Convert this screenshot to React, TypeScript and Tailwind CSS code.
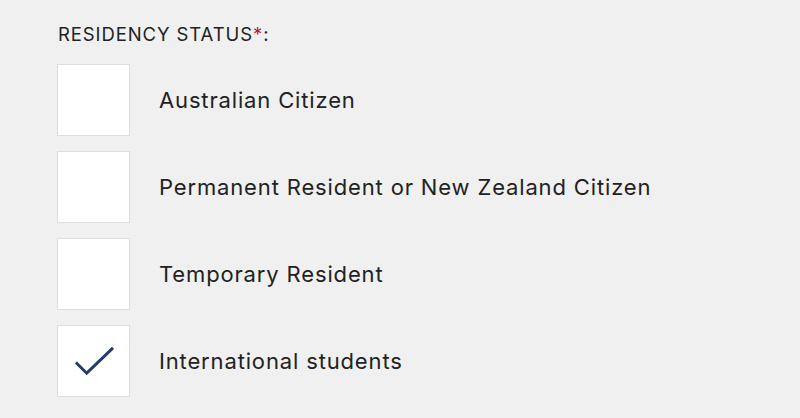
import React, { useState } from 'react';

const options = [
  'Australian Citizen',
  'Permanent Resident or New Zealand Citizen',
  'Temporary Resident',
  'International students',
];

export default function App() {
  const [selected, setSelected] = useState<string[]>(['International students']);

  const toggle = (opt: string) => {
    setSelected((s) => (s.includes(opt) ? s.filter((x) => x !== opt) : [...s, opt]));
  };

  return (
    <div className="w-[800px] h-[418px] bg-[#f0f0f0] pl-[57px] pt-[21px] font-['Inter',sans-serif] text-[#222]">
      <div className="text-[18.5px] leading-[26px] tracking-[0.9px] pl-[1px]">
        RESIDENCY STATUS<span className="text-[#b0213b]">*</span>:
      </div>
      <div className="flex flex-col gap-[15px] mt-[17px]">
        {options.map((opt) => (
          <label key={opt} className="flex items-center cursor-pointer" onClick={() => toggle(opt)}>
            <div className="w-[73px] h-[72px] bg-white border border-[#dedede] flex items-center justify-center shrink-0">
              {selected.includes(opt) && (
                <svg width="73" height="72" viewBox="0 0 73 72" fill="none">
                  <path d="M19.5 22.5 L29.5 32.5 L55.5 7.5" transform="translate(0 16)" stroke="#243d6b" strokeWidth="3" strokeLinecap="square" />
                </svg>
              )}
            </div>
            <span className="ml-[29px] text-[22px] leading-[30px] tracking-[0.85px]">{opt}</span>
          </label>
        ))}
      </div>
    </div>
  );
}
